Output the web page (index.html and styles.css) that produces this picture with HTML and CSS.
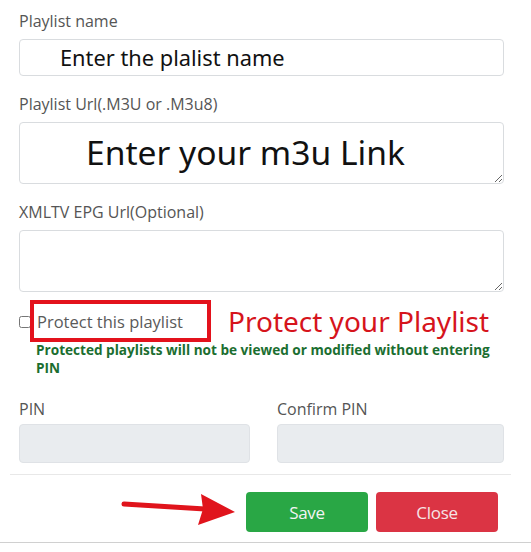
FILE: index.html
```html
<!DOCTYPE html>
<html lang="en">
<head>
<meta charset="utf-8">
<title>Playlist form</title>
<link rel="stylesheet" href="styles.css">
</head>
<body>
<div class="page">
  <form class="form">
    <div class="field">
      <label class="label">Playlist name</label>
      <div class="input input-name">Enter the plalist name</div>
    </div>
    <div class="field">
      <label class="label">Playlist Url(.M3U or .M3u8)</label>
      <div class="textarea-wrap">
        <textarea class="textarea"></textarea>
        <span class="overlay-text big">Enter your m3u Link</span>
      </div>
    </div>
    <div class="field">
      <label class="label">XMLTV EPG Url(Optional)</label>
      <div class="textarea-wrap">
        <textarea class="textarea"></textarea>
      </div>
    </div>
    <div class="check-row">
      <input type="checkbox" class="checkbox">
      <span class="check-label">Protect this playlist</span>
      <span class="annot-text">Protect your Playlist</span>
    </div>
    <p class="hint">Protected playlists will not be viewed or modified without entering PIN</p>
    <div class="pin-row">
      <div class="pin-field">
        <label class="label">PIN</label>
        <div class="input input-disabled"></div>
      </div>
      <div class="pin-field">
        <label class="label">Confirm PIN</label>
        <div class="input input-disabled"></div>
      </div>
    </div>
  </form>
  <div class="footer">
    <button class="btn btn-save">Save</button>
    <button class="btn btn-close">Close</button>
    <svg class="arrow" width="120" height="34" viewBox="0 0 120 34">
      <path d="M3 10 L84 15" stroke="#e0141c" stroke-width="5" stroke-linecap="round" fill="none"/>
      <path d="M80 0 L114 18 L77 31 L82 15 Z" fill="#e0141c"/>
    </svg>
  </div>
  <div class="bottom-line"></div>
</div>
</body>
</html>
```

FILE: styles.css
```css
html, body {
  margin: 0;
  padding: 0;
  background: #ffffff;
}

.page {
  width: 531px;
  height: 552px;
  position: relative;
  font-family: "Open Sans", "Noto Sans", sans-serif;
  overflow: hidden;
}

.form {
  padding: 10px 27px 0 19px;
  display: flex;
  flex-direction: column;
}

.field {
  display: flex;
  flex-direction: column;
  margin-bottom: 17px;
}

.label {
  font-size: 16px;
  line-height: 22px;
  color: #555555;
  margin-bottom: 7px;
}

.input {
  height: 35px;
  border: 1px solid #d9dcdf;
  border-radius: 4px;
  box-sizing: content-box;
  display: flex;
  align-items: center;
}

.input-name {
  padding-left: 40px;
  font-size: 21.8px;
  color: #111111;
  font-family: "Noto Sans", "Open Sans", sans-serif;
}

.textarea-wrap {
  position: relative;
  height: 62px;
}

.textarea {
  width: 100%;
  height: 62px;
  box-sizing: border-box;
  border: 1px solid #d9dcdf;
  border-radius: 4px;
  resize: vertical;
  margin: 0;
  display: block;
}

.overlay-text {
  position: absolute;
  left: 67px;
  top: 7px;
  color: #111111;
  pointer-events: none;
}

.big {
  font-family: "Noto Sans", "Open Sans", sans-serif;
  font-size: 33.6px;
  line-height: 46px;
}

.check-row {
  display: flex;
  align-items: center;
  margin-top: -9px;
}

.checkbox {
  margin: 2px 0 0 0;
  width: 12px;
  height: 12px;
}

.check-label {
  box-sizing: border-box;
  height: 42px;
  width: 181px;
  border: 4px solid #e3121c;
  padding: 0 0 0 3px;
  margin-left: -1px;
  display: flex;
  align-items: center;
  font-size: 16.5px;
  color: #5a5a5a;
}

.annot-text {
  margin-left: 17px;
  font-family: "Noto Sans", "Open Sans", sans-serif;
  font-size: 28px;
  color: #d6141c;
}

.hint {
  margin: -1px 0 0 17px;
  font-size: 13.6px;
  line-height: 18px;
  font-weight: 700;
  color: #1b6e30;
}

.pin-row {
  display: grid;
  grid-template-columns: 231px 227px;
  column-gap: 27px;
  margin-top: 21px;
}

.pin-field {
  display: flex;
  flex-direction: column;
}

.pin-field .label {
  margin-bottom: 4px;
}

.input-disabled {
  background: #e9ecef;
  height: 37px;
  border-color: #dfe2e6;
}

.footer {
  margin: 11px 20px 0 10px;
  border-top: 1px solid #e8e8e8;
  padding-top: 17px;
  display: flex;
  justify-content: flex-end;
  gap: 8px;
  padding-right: 13px;
  position: relative;
}

.btn {
  width: 122px;
  height: 40px;
  border: none;
  border-radius: 4px;
  font-family: "Open Sans", "Noto Sans", sans-serif;
  font-size: 17px;
  color: #f4f4f4;
  letter-spacing: -0.3px;
}

.btn-save {
  background: #29a745;
}

.btn-close {
  background: #db3444;
  color: #f6e4e6;
}

.arrow {
  position: absolute;
  left: 111px;
  top: 19px;
}

.bottom-line {
  position: absolute;
  left: 0;
  right: 0;
  top: 542px;
  border-top: 1px solid #d0d0d0;
}
```
